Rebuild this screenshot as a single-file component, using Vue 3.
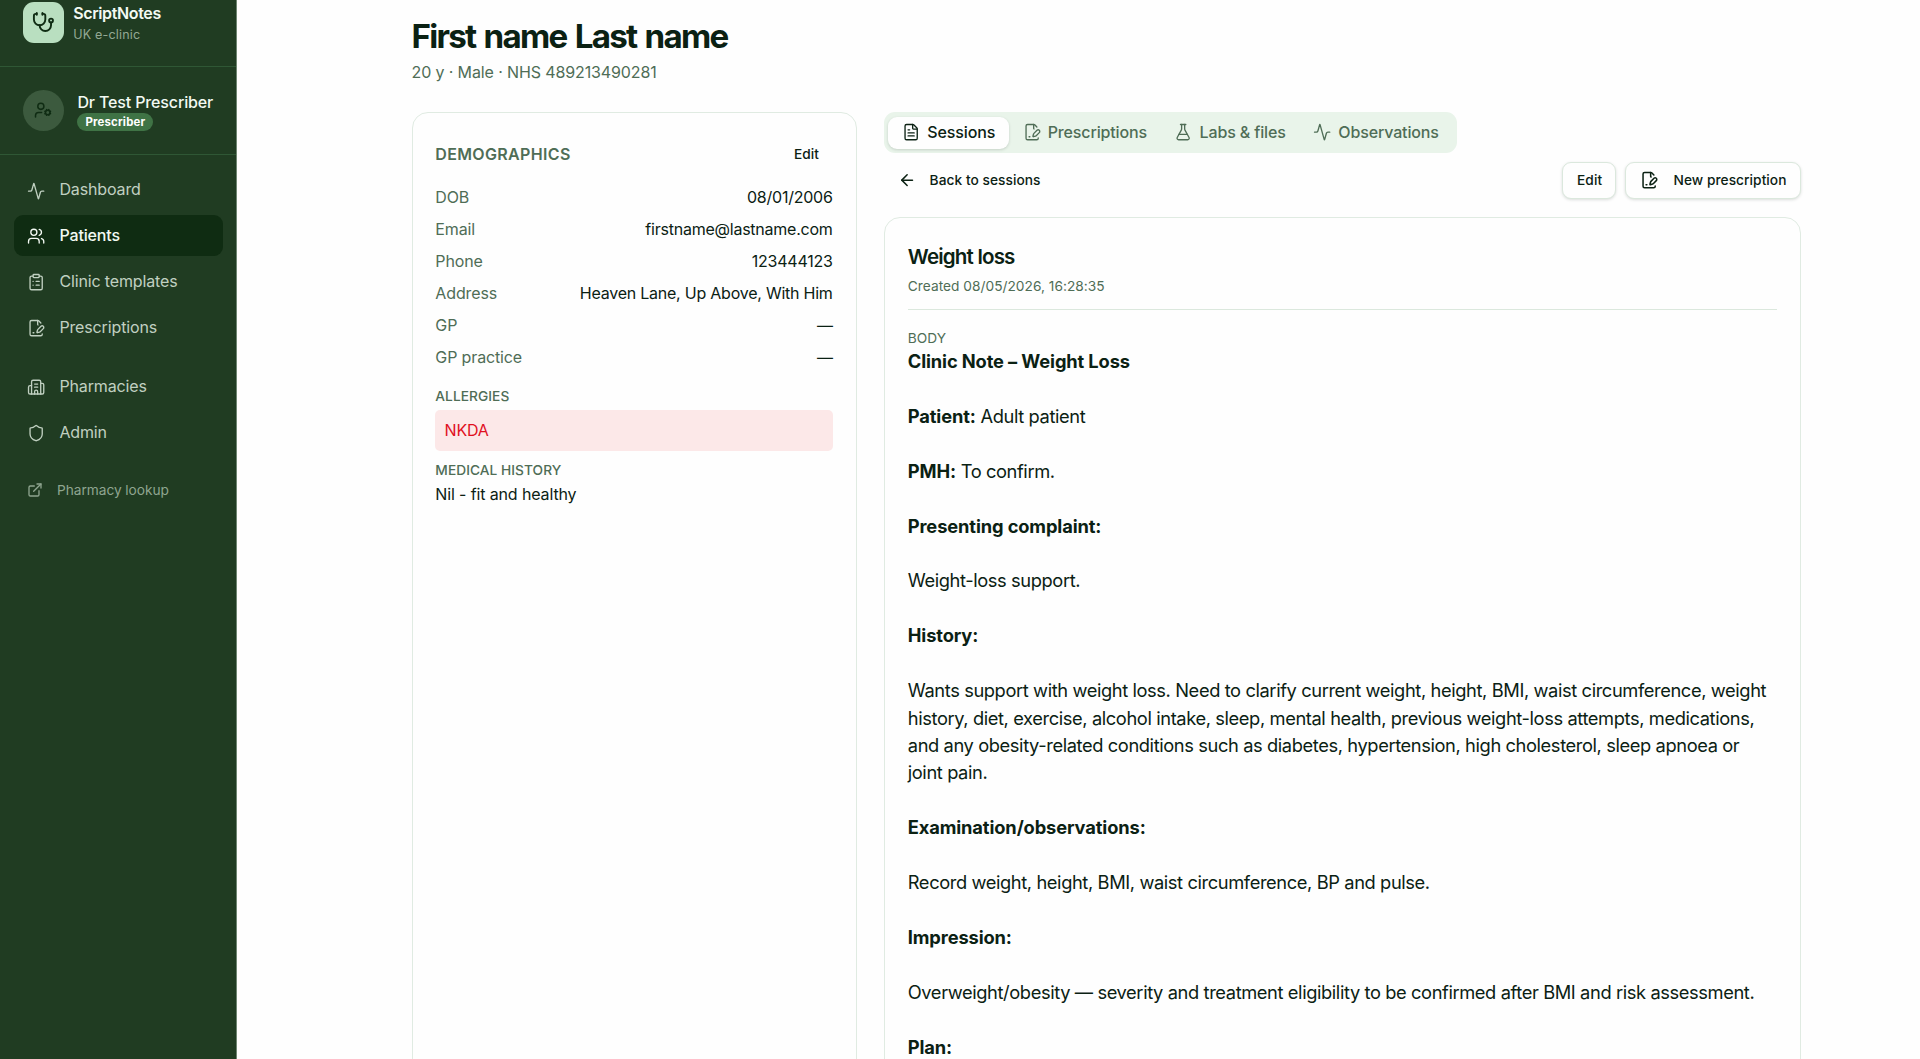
<template>
  <div class="app-shell">
    <aside class="sidebar">
      <div class="brand">
        <div class="brand-logo">
          <svg class="icon" viewBox="0 0 24 24" v-html="icons.stethoscope"></svg>
        </div>
        <div>
          <div class="brand-name">ScriptNotes</div>
          <div class="brand-sub">UK e-clinic</div>
        </div>
      </div>

      <div class="user">
        <div class="avatar">
          <svg class="icon" viewBox="0 0 24 24" v-html="icons.userCog"></svg>
        </div>
        <div>
          <div class="user-name">Dr Test Prescriber</div>
          <span class="role-badge">Prescriber</span>
        </div>
      </div>

      <nav class="nav">
        <div v-for="(group, i) in navGroups" :key="i" class="nav-group">
          <a v-for="item in group" :key="item.label" class="nav-item" :class="{ active: item.active }">
            <svg class="icon" viewBox="0 0 24 24" v-html="icons[item.icon]"></svg>
            {{ item.label }}
          </a>
        </div>
        <a class="nav-link">
          <svg class="icon" viewBox="0 0 24 24" v-html="icons.external"></svg>
          Pharmacy lookup
        </a>
      </nav>
    </aside>

    <main class="main">
      <h1 class="patient-name">First name Last name</h1>
      <p class="patient-meta">20 y · Male · NHS 489213490281</p>

      <div class="columns">
        <section class="card demographics">
          <div class="card-head">
            <h2>Demographics</h2>
            <button class="btn ghost">Edit</button>
          </div>
          <dl class="details">
            <div v-for="row in details" :key="row.label" class="detail-row">
              <dt>{{ row.label }}</dt>
              <dd>{{ row.value }}</dd>
            </div>
          </dl>
          <h3 class="label allergies-label">Allergies</h3>
          <div class="allergy-box">NKDA</div>
          <h3 class="label history-label">Medical history</h3>
          <p class="history">Nil - fit and healthy</p>
        </section>

        <div class="content">
          <div class="tabs">
            <button v-for="tab in tabs" :key="tab.label" class="tab" :class="{ active: tab.label === activeTab }" @click="activeTab = tab.label">
              <svg class="icon" viewBox="0 0 24 24" v-html="icons[tab.icon]"></svg>
              <span>{{ tab.label }}</span>
            </button>
          </div>

          <div class="toolbar">
            <button class="btn ghost back">
              <svg class="icon" viewBox="0 0 24 24" v-html="icons.arrowLeft"></svg>
              Back to sessions
            </button>
            <div class="toolbar-actions">
              <button class="btn outline">Edit</button>
              <button class="btn outline new">
                <svg class="icon" viewBox="0 0 24 24" v-html="icons.prescription"></svg>
                New prescription
              </button>
            </div>
          </div>

          <section class="card session">
            <h2 class="session-title">Weight loss</h2>
            <p class="session-date">Created 08/05/2026, 16:28:35</p>
            <hr />
            <div class="body-label">BODY</div>
            <div class="note">
              <p v-for="(line, i) in note" :key="i">
                <strong v-if="line.bold">{{ line.bold }}</strong>
                {{ line.text }}
              </p>
            </div>
          </section>
        </div>
      </div>
    </main>
  </div>
</template>

<script setup>
import { ref } from 'vue'

const activeTab = ref('Sessions')

const icons = {
  stethoscope: '<path d="M11 2v2"/><path d="M5 2v2"/><path d="M5 3H4a2 2 0 0 0-2 2v4a6 6 0 0 0 12 0V5a2 2 0 0 0-2-2h-1"/><path d="M8 15a6 6 0 0 0 12 0v-3"/><circle cx="20" cy="10" r="2"/>',
  userCog: '<path d="M10 15H6a4 4 0 0 0-4 4v2"/><path d="m14.305 16.53.923-.382"/><path d="m15.228 13.852-.923-.383"/><path d="m16.852 12.228-.383-.923"/><path d="m16.852 17.772-.383.924"/><path d="m19.148 12.228.383-.923"/><path d="m19.53 18.696-.382-.924"/><path d="m20.772 13.852.924-.383"/><path d="m20.772 16.148.924.383"/><circle cx="18" cy="15" r="3"/><circle cx="9" cy="7" r="4"/>',
  activity: '<path d="M22 12h-2.48a2 2 0 0 0-1.93 1.46l-2.35 8.36a.25.25 0 0 1-.48 0L9.24 2.18a.25.25 0 0 0-.48 0l-2.35 8.36A2 2 0 0 1 4.49 12H2"/>',
  users: '<path d="M16 21v-2a4 4 0 0 0-4-4H6a4 4 0 0 0-4 4v2"/><path d="M16 3.128a4 4 0 0 1 0 7.744"/><path d="M22 21v-2a4 4 0 0 0-3-3.87"/><circle cx="9" cy="7" r="4"/>',
  clipboard: '<rect width="8" height="4" x="8" y="2" rx="1" ry="1"/><path d="M16 4h2a2 2 0 0 1 2 2v14a2 2 0 0 1-2 2H6a2 2 0 0 1-2-2V6a2 2 0 0 1 2-2h2"/><path d="M12 11h4"/><path d="M12 16h4"/><path d="M8 11h.01"/><path d="M8 16h.01"/>',
  prescription: '<path d="M14.364 13.634a2 2 0 0 0-.506.854l-.837 2.87a.5.5 0 0 0 .62.62l2.87-.837a2 2 0 0 0 .854-.506l4.013-4.009a1 1 0 0 0-3.004-3.004z"/><path d="M14.487 7.858A1 1 0 0 1 14 7V2"/><path d="M20 19.645V20a2 2 0 0 1-2 2H6a2 2 0 0 1-2-2V4a2 2 0 0 1 2-2h8a2.4 2.4 0 0 1 1.704.706l2.516 2.516"/><path d="M8 18h1"/>',
  building: '<path d="M10 12h4"/><path d="M10 8h4"/><path d="M14 21v-3a2 2 0 0 0-4 0v3"/><path d="M6 10H4a2 2 0 0 0-2 2v7a2 2 0 0 0 2 2h16a2 2 0 0 0 2-2V9a2 2 0 0 0-2-2h-2"/><path d="M6 21V5a2 2 0 0 1 2-2h8a2 2 0 0 1 2 2v16"/>',
  shield: '<path d="M20 13c0 5-3.5 7.5-7.66 8.95a1 1 0 0 1-.67-.01C7.5 20.5 4 18 4 13V6a1 1 0 0 1 1-1c2 0 4.5-1.2 6.24-2.72a1.17 1.17 0 0 1 1.52 0C14.51 3.81 17 5 19 5a1 1 0 0 1 1 1z"/>',
  external: '<path d="M15 3h6v6"/><path d="M10 14 21 3"/><path d="M18 13v6a2 2 0 0 1-2 2H5a2 2 0 0 1-2-2V8a2 2 0 0 1 2-2h6"/>',
  fileText: '<path d="M6 22a2 2 0 0 1-2-2V4a2 2 0 0 1 2-2h8a2.4 2.4 0 0 1 1.704.706l3.588 3.588A2.4 2.4 0 0 1 20 8v12a2 2 0 0 1-2 2z"/><path d="M14 2v5a1 1 0 0 0 1 1h5"/><path d="M10 9H8"/><path d="M16 13H8"/><path d="M16 17H8"/>',
  flask: '<path d="M14 2v6a2 2 0 0 0 .245.96l5.51 10.08A2 2 0 0 1 18 22H6a2 2 0 0 1-1.755-2.96l5.51-10.08A2 2 0 0 0 10 8V2"/><path d="M6.453 15h11.094"/><path d="M8.5 2h7"/>',
  arrowLeft: '<path d="m12 19-7-7 7-7"/><path d="M19 12H5"/>'
}

const navGroups = [
  [
    { label: 'Dashboard', icon: 'activity' },
    { label: 'Patients', icon: 'users', active: true },
    { label: 'Clinic templates', icon: 'clipboard' },
    { label: 'Prescriptions', icon: 'prescription' }
  ],
  [
    { label: 'Pharmacies', icon: 'building' },
    { label: 'Admin', icon: 'shield' }
  ]
]

const details = [
  { label: 'DOB', value: '08/01/2006' },
  { label: 'Email', value: 'firstname@lastname.com' },
  { label: 'Phone', value: '123444123' },
  { label: 'Address', value: 'Heaven Lane, Up Above, With Him' },
  { label: 'GP', value: '—' },
  { label: 'GP practice', value: '—' }
]

const tabs = [
  { label: 'Sessions', icon: 'fileText' },
  { label: 'Prescriptions', icon: 'prescription' },
  { label: 'Labs & files', icon: 'flask' },
  { label: 'Observations', icon: 'activity' }
]

const note = [
  { bold: 'Clinic Note – Weight Loss' },
  { bold: 'Patient:', text: 'Adult patient' },
  { bold: 'PMH:', text: 'To confirm.' },
  { bold: 'Presenting complaint:' },
  { text: 'Weight-loss support.' },
  { bold: 'History:' },
  { text: 'Wants support with weight loss. Need to clarify current weight, height, BMI, waist circumference, weight history, diet, exercise, alcohol intake, sleep, mental health, previous weight-loss attempts, medications, and any obesity-related conditions such as diabetes, hypertension, high cholesterol, sleep apnoea or joint pain.' },
  { bold: 'Examination/observations:' },
  { text: 'Record weight, height, BMI, waist circumference, BP and pulse.' },
  { bold: 'Impression:' },
  { text: 'Overweight/obesity — severity and treatment eligibility to be confirmed after BMI and risk assessment.' },
  { bold: 'Plan:' }
]
</script>

<style>
html {
  font-size: 18.2857px;
}

body {
  overflow: hidden;
  background: #fefefe;
}
</style>

<style scoped>
.app-shell {
  display: flex;
  height: 100vh;
  overflow: hidden;
  font-family: Inter, "Liberation Sans", sans-serif;
  font-size: 0.875rem;
  line-height: 1.25rem;
  letter-spacing: -0.008em;
  color: #0b2113;
}

h1, h2, h3, p, dl, dd {
  margin: 0;
}

button {
  font: inherit;
  letter-spacing: inherit;
  color: inherit;
  border: 0;
  background: none;
  cursor: pointer;
}

.icon {
  width: 1rem;
  height: 1rem;
  flex-shrink: 0;
  fill: none;
  stroke: currentColor;
  stroke-width: 2;
  stroke-linecap: round;
  stroke-linejoin: round;
}

/* Sidebar */
.sidebar {
  width: 237px;
  flex-shrink: 0;
  box-sizing: border-box;
  background: #203c22;
  border-right: 1px solid #6e8570;
  color: #c0d0c1;
}

.brand {
  display: flex;
  gap: 0.5rem;
  padding: 2px 1.25rem 1.25rem;
  border-bottom: 1px solid #2f5735;
}

.brand-logo,
.avatar {
  display: flex;
  align-items: center;
  justify-content: center;
  width: 2.25rem;
  height: 2.25rem;
  color: #0f2c13;
}

.brand-logo {
  border-radius: 11px;
  background: #b9dfc0;
}

.brand-logo .icon {
  width: 1.25rem;
  height: 1.25rem;
}

.brand-name {
  padding-top: 1px;
  font-weight: 600;
  letter-spacing: -0.022em;
  color: #f3faf3;
}

.brand-sub {
  font-size: 0.6875rem;
  line-height: 17px;
  letter-spacing: 0.014em;
  color: #93a894;
}

.user {
  display: flex;
  gap: 0.75rem;
  padding: 1.25rem;
  border-bottom: 1px solid #2f5735;
}

.avatar {
  border-radius: 50%;
  background: #3c5a3e;
}

.user-name {
  padding-top: 2px;
  font-weight: 500;
  white-space: nowrap;
  color: #f3faf3;
}

.role-badge {
  display: block;
  width: fit-content;
  margin-top: -2px;
  padding: 0 8px;
  border-radius: 9px;
  background: #3f7345;
  font-size: 0.625rem;
  font-weight: 700;
  line-height: 18px;
  letter-spacing: 0.016em;
  color: #fff;
}

.nav {
  padding: 14.5px 13px 0 0.75rem;
}

.nav-group {
  display: flex;
  flex-direction: column;
  gap: 0.25rem;
  margin-bottom: 1rem;
}

.nav-item {
  display: flex;
  align-items: center;
  gap: 0.75rem;
  box-sizing: border-box;
  height: 2.25rem;
  padding: 2px 0.75rem 0;
  border-radius: 9px;
}

.nav-item.active {
  background: #0f2c12;
  font-weight: 500;
  color: #f3faf3;
}

.nav-item .icon {
  stroke-width: 1.75;
}

.nav-link {
  display: flex;
  align-items: center;
  gap: 0.75rem;
  padding: 7.6px 0.75rem;
  font-size: 0.75rem;
  letter-spacing: -0.004em;
  color: #8fa590;
}

.nav-link .icon {
  width: 0.875rem;
  height: 0.875rem;
}

/* Patient header */
.main {
  width: 1389px;
  margin-left: 174.5px;
  padding-top: 16px;
}

.patient-name {
  font-size: 1.8125rem;
  font-weight: 700;
  line-height: 2.25rem;
  letter-spacing: -0.052em;
  word-spacing: 2px;
}

.patient-meta {
  margin-top: 0.25rem;
  letter-spacing: -0.007em;
  color: #4f6d56;
}

.columns {
  display: grid;
  grid-template-columns: 445px 1fr;
  gap: 1.5rem;
  margin-top: 1.5rem;
}

.card {
  padding: 1.25rem;
  border: 1px solid #e0ebe2;
  border-radius: 16px;
  background: #fefefe;
}

/* Demographics */
.card-head {
  display: flex;
  align-items: center;
  justify-content: space-between;
  margin-bottom: 0.75rem;
}

.card-head h2 {
  padding-top: 2px;
  font-size: 0.875rem;
  font-weight: 600;
  letter-spacing: 0.022em;
  text-transform: uppercase;
  color: #4f6d56;
}

.btn {
  display: flex;
  align-items: center;
  height: 2rem;
  padding: 0 0.75rem;
  border-radius: 9px;
  font-size: 0.75rem;
  font-weight: 500;
  letter-spacing: 0.004em;
}

.btn.outline {
  padding: 0 13px 0 14px;
  border: 1px solid #dbe8dd;
  background: #fefefe;
  box-shadow: 0 1px 3px rgba(11, 33, 19, 0.15);
}

.btn.back {
  gap: 0.75rem;
}

.btn.new {
  gap: 15px;
}

.details {
  display: flex;
  flex-direction: column;
  gap: 0.5rem;
  padding-top: 1px;
}

.detail-row {
  display: flex;
  justify-content: space-between;
}

.detail-row dt {
  color: #4f6d56;
}

.detail-row dd {
  letter-spacing: -0.014em;
}

.label {
  font-size: 0.75rem;
  font-weight: 500;
  line-height: 1rem;
  letter-spacing: 0.004em;
  text-transform: uppercase;
  color: #4f6d56;
}

.allergies-label {
  margin-top: 17.5px;
}

.allergy-box {
  margin-top: 0.25rem;
  padding: 10px 0.5rem 8.3px;
  border-radius: 5px;
  background: #fce8e8;
  color: #e0101f;
}

.history-label {
  margin-top: 0.5rem;
}

.history {
  margin-top: 5.5px;
}

/* Tabs */
.tabs {
  display: flex;
  width: fit-content;
  padding: 0.25rem;
  border-radius: 11px;
  background: #e9f4ea;
}

.tab {
  display: flex;
  align-items: center;
  gap: 0.375rem;
  height: 1.75rem;
  padding: 0 0.75rem;
  border-radius: 9px;
  font-weight: 500;
  color: #4f6d56;
}

.tab span {
  padding-top: 1px;
}

.tab .icon {
  stroke-width: 1.75;
}

.tab.active {
  background: #fefefe;
  box-shadow: 0 1px 3px rgba(11, 33, 19, 0.16);
  color: #0b2113;
}

.toolbar {
  display: flex;
  justify-content: space-between;
  margin: 0.5rem 0 1rem;
}

.toolbar-actions {
  display: flex;
  gap: 0.5rem;
}

/* Session note */
.session-title {
  font-size: 1.125rem;
  font-weight: 600;
  line-height: 1.75rem;
  letter-spacing: -0.04em;
}

.session-date {
  margin-top: 0.25rem;
  font-size: 0.75rem;
  line-height: 1rem;
  letter-spacing: 0.002em;
  color: #4f6d56;
}

hr {
  height: 1px;
  margin: 0.75rem 0 1rem;
  border: 0;
  background: #dbe8dd;
}

.body-label {
  font-size: 0.75rem;
  line-height: 1rem;
  letter-spacing: 0;
  color: #4f6d56;
}

.note {
  display: flex;
  flex-direction: column;
  gap: 1.5rem;
  padding: 1px 6px 0 0;
  font-size: 1rem;
  line-height: 1.5rem;
  letter-spacing: -0.0212em;
}

.note strong {
  font-weight: 700;
  letter-spacing: -0.006em;
}
</style>
